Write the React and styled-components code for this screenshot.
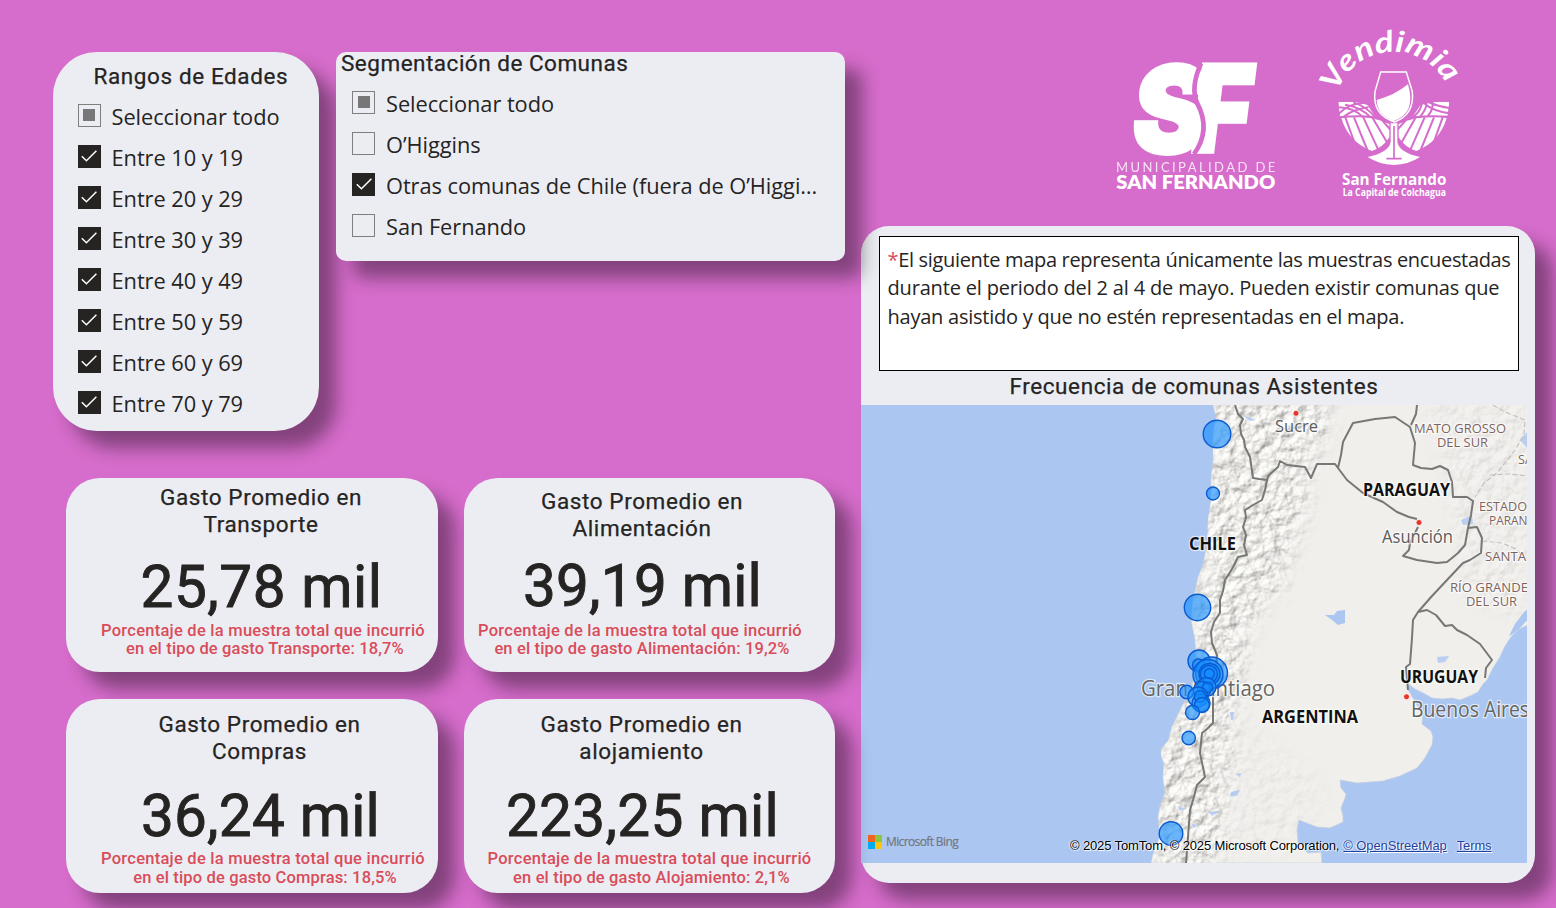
import React from "react";
import styled, { createGlobalStyle } from "styled-components";

const GlobalStyle = createGlobalStyle`
  * { box-sizing: border-box; }
  body { margin: 0; background: #d66ccb; overflow: hidden; }
`;

const din = `Roboto, "Liberation Sans", sans-serif`;
const segoe = `"Open Sans", "Noto Sans", sans-serif`;

const Page = styled.main`
  display: flex;
  width: 1556px;
  height: 908px;
  padding-left: 53px;
  background: #d66ccb;
  color: #252423;
  overflow: hidden;
`;

const LeftColumn = styled.div`
  position: relative;
  z-index: 1;
  display: flex;
  flex-direction: column;
  width: 808px;
  padding-top: 52px;
`;

const RightColumn = styled.div`
  display: flex;
  flex-direction: column;
  width: 674px;
`;

const Card = styled.section`
  background: #ecedf3;
  border-radius: ${(p) => p.$radius}px;
  box-shadow: 17px 17px 18px 0 rgba(0, 0, 0, 0.39);
`;

const SlicerRow = styled.div`
  display: flex;
  align-items: flex-start;
  gap: 17px;
  height: 426px;
`;

const AgeSlicer = styled(Card)`
  width: 266px;
  height: 379px;
  padding: 10.5px 0 0 24.5px;
`;

const ComunaSlicer = styled(Card)`
  width: 509px;
  height: 209px;
  padding-left: 16px;
`;

const Title = styled.h2`
  margin: 0;
  font: 400 22.5px/27px ${din};
  letter-spacing: 0.6px;
  white-space: nowrap;
  -webkit-text-stroke: 0.25px #252423;
`;

const AgeTitle = styled(Title)`
  padding-left: 16px;
  margin-bottom: 6.5px;
`;

const ComunaTitle = styled(Title)`
  margin: 0 0 8px -11px;
  line-height: 23px;
  letter-spacing: 0.5px;
`;

const OptionRow = styled.label`
  display: flex;
  align-items: center;
  gap: 11px;
  height: 41px;
  font: 400 21.8px/41px ${segoe};
  letter-spacing: -0.05px;
  white-space: nowrap;
`;

const Box = styled.span`
  display: flex;
  align-items: center;
  justify-content: center;
  width: 23px;
  height: 23px;
  margin-bottom: 3px;
  border: 1.5px solid ${(p) => (p.$state === "on" ? "#252423" : "#7f7f80")};
  background: ${(p) => (p.$state === "on" ? "#252423" : "transparent")};
`;

const PartialMark = styled.span`
  width: 12px;
  height: 12px;
  background: #777;
`;

const CardGrid = styled.div`
  display: grid;
  grid-template-columns: 372px 371px;
  grid-auto-rows: 194px;
  gap: 27px 26px;
  padding-left: 13px;
`;

const MetricCard = styled(Card)`
  padding-top: ${(p) => p.$top}px;
  text-align: center;
`;

const MetricTitle = styled(Title)`
  margin-left: ${(p) => p.$shift}px;
  white-space: pre-line;
`;

const MetricValue = styled.div`
  margin: ${(p) => p.$gap}px 0 0 ${(p) => p.$shift}px;
  font: 400 58.5px/60px ${din};
  letter-spacing: ${(p) => p.$spacing}px;
  white-space: nowrap;
  -webkit-text-stroke: 0.9px #252423;
`;

const MetricNote = styled.p`
  margin: ${(p) => p.$gap}px 0 0 ${(p) => p.$shift}px;
  font: 500 16.5px/${(p) => p.$line}px ${din};
  letter-spacing: 0.25px;
  color: #d94c59;
  white-space: nowrap;
`;

const NoteDetail = styled.span`
  display: block;
  padding-left: 4px;
  letter-spacing: 0.15px;
`;

const Logos = styled.header`
  display: flex;
  gap: 43px;
  height: 226px;
  padding: 32px 0 0 254px;
`;

const MunicipalLogo = styled.svg`
  width: 162px;
  height: 132px;
  margin-top: 28px;
  overflow: visible;
`;

const VendimiaLogo = styled.svg`
  width: 136px;
  height: 169px;
  overflow: visible;
`;

const MapPanel = styled(Card)`
  height: 657px;
  padding-top: 10px;
`;

const Notice = styled.p`
  width: 640px;
  height: 135px;
  margin: 0 0 1.5px 18px;
  padding: 8.5px 0 0 7.5px;
  border: 1.6px solid #000;
  background: #fff;
  font: 400 20px/28.5px ${segoe};
  white-space: nowrap;
`;

const NoticeLine = styled.span`
  display: block;
  letter-spacing: ${(p) => p.$spacing}px;
`;

const Asterisk = styled.span`
  color: #d94c59;
`;

const MapTitle = styled(Title)`
  padding-right: 8px;
  margin-bottom: 5.5px;
  text-align: center;
`;

const MapFrame = styled.div`
  position: relative;
  width: 666px;
  height: 457.5px;
`;

const MapDrawing = styled.svg`
  display: block;
  width: 666px;
  height: 457.5px;
`;

const Brand = styled.div`
  position: absolute;
  left: 7px;
  bottom: 13px;
  display: flex;
  align-items: center;
  gap: 4px;
  font: 400 12px/16px ${segoe};
  letter-spacing: -0.62px;
  color: #72777f;
  -webkit-text-stroke: 0.2px #72777f;
`;

const BrandSquares = styled.span`
  display: grid;
  grid-template-columns: 7px 7px;
  grid-auto-rows: 7px;
`;

const Square = styled.i`
  background: ${(p) => p.$color};
`;

const Attribution = styled.div`
  position: absolute;
  right: 35.5px;
  bottom: 9px;
  display: flex;
  font: 400 13px/16px "Liberation Sans", Arial, sans-serif;
  letter-spacing: -0.14px;
  color: #000;
  white-space: pre;
  text-shadow: 1px 1px 1px #fff, -1px 0 1px #fff;
`;

const MapLink = styled.a`
  margin-left: ${(p) => p.$gap}px;
  color: #1f3f9e;
  letter-spacing: -0.05px;
  font-size: 12.9px;
  text-decoration: underline;
`;

const ages = ["10 y 19", "20 y 29", "30 y 39", "40 y 49", "50 y 59", "60 y 69", "70 y 79"];

const comunas = [
  { label: "Seleccionar todo", state: "partial" },
  { label: "O’Higgins", state: "off" },
  { label: "Otras comunas de Chile (fuera de O’Higgi…", state: "on" },
  { label: "San Fernando", state: "off" },
];

const metrics = [
  { name: "Transporte", note: "Transporte: 18,7%", value: "25,78 mil", top: 5.5, line: 18.3, gaps: [19, 5.5], shifts: [18, 19, 22], spacing: 0.5 },
  { name: "Alimentación", note: "Alimentación: 19,2%", value: "39,19 mil", top: 9.5, line: 18.3, gaps: [14, 6.5], shifts: [-15, -14, -19], spacing: 0.2 },
  { name: "Compras", note: "Compras: 18,5%", value: "36,24 mil", top: 11.5, line: 19, gaps: [21, 3], shifts: [15, 17, 22], spacing: 0.2 },
  { name: "alojamiento", note: "Alojamiento: 2,1%", value: "223,25 mil", top: 11.5, line: 19, gaps: [21, 3], shifts: [-16, -14, 0], spacing: 0.3 },
];

function Option({ label, state }) {
  return (
    <OptionRow>
      <Box $state={state}>
        {state === "partial" && <PartialMark />}
        {state === "on" && (
          <svg width="20" height="20" viewBox="0 0 20 20" fill="none" stroke="#fff" strokeWidth="1.5">
            <path d="M2.8 10.2 L7.4 14.8 L17.4 4.8" />
          </svg>
        )}
      </Box>
      {label}
    </OptionRow>
  );
}

function Metric({ name, note, value, top, line, gaps, shifts, spacing }) {
  return (
    <MetricCard $radius={34} $top={top}>
      <MetricTitle $shift={shifts[0]}>{`Gasto Promedio en\n${name}`}</MetricTitle>
      <MetricValue $gap={gaps[0]} $shift={shifts[1]} $spacing={spacing}>{value}</MetricValue>
      <MetricNote $gap={gaps[1]} $shift={shifts[2]} $line={line}>
        Porcentaje de la muestra total que incurrió
        <NoteDetail>en el tipo de gasto {note}</NoteDetail>
      </MetricNote>
    </MetricCard>
  );
}

function Municipality() {
  return (
    <MunicipalLogo viewBox="45 120 486 396" fill="#fff">
      <g fontFamily="Inter, sans-serif" fontWeight="900" fontSize="362" stroke="#fff" strokeWidth="11">
        <text transform="translate(88 398) skewX(-6)" textLength="222" lengthAdjust="spacingAndGlyphs">S</text>
        <text transform="translate(264 396) skewX(-7)" textLength="178" lengthAdjust="spacingAndGlyphs">F</text>
      </g>
      <path d="M303 130 Q270 205 292 250 Q334 330 282 402" fill="none" stroke="#d66ccb" strokeWidth="14" />
      <text x="48" y="457" fontFamily="Lato, sans-serif" fontWeight="400" fontSize="39" textLength="478" opacity="0.8">MUNICIPALIDAD DE</text>
      <text x="49" y="507" fontFamily="Lato, sans-serif" fontWeight="800" fontSize="57" textLength="477" lengthAdjust="spacingAndGlyphs">SAN FERNANDO</text>
    </MunicipalLogo>
  );
}

function Vendimia() {
  return (
    <VendimiaLogo viewBox="660 36 408 507" fill="#fff">
      <defs>
        <path id="arch" d="M712 216 A 178 178 0 0 1 1052 226" />
        <clipPath id="bowl"><path d="M715 245 H1048 Q1050 320 1010 372 L962 395 H800 L752 372 Q714 320 715 245 Z" /></clipPath>
      </defs>
      <text fontFamily="Lato, sans-serif" fontStyle="italic" fontWeight="700" fontSize="88">
        <textPath href="#arch" textLength="414" lengthAdjust="spacingAndGlyphs">Vendimia</textPath>
      </text>
      <g clipPath="url(#bowl)">
        <path d="M715 246 Q765 240 802 255 L826 290 H720 Z" />
        <path d="M1048 246 Q1000 240 962 255 L938 290 H1042 Z" />
        <path d="M724 294 Q800 282 868 312 V352 Q850 382 815 393 Q745 365 724 294 Z" />
        <path d="M1040 294 Q964 282 896 312 V352 Q914 382 949 393 Q1019 365 1040 294 Z" />
        <g fill="none" stroke="#d66ccb" strokeWidth="6">
          <path d="M715 262 Q760 262 790 292 M735 254 Q785 262 812 292 M760 247 Q800 260 824 290 M715 282 Q745 250 795 248 M730 291 Q760 268 805 262" />
          <path d="M1048 264 Q1010 258 985 246 M1048 280 Q1000 274 972 250 M938 292 Q965 272 966 246 M958 292 Q980 270 980 246 M980 292 Q1000 272 998 246 M716 292 Q780 286 826 292 M938 292 Q990 286 1048 290" />
          <path d="M736 292 L765 372 M762 292 L802 390 M790 292 L836 392 M818 294 L864 372 M846 300 L872 330 M1028 292 L998 376 M1002 292 L962 390 M974 292 L930 392 M946 294 L902 372 M918 300 L890 332" />
        </g>
      </g>
      <path d="M842 156 H919 L937 215 Q944 284 884 306 V366 Q890 398 960 410 Q925 434 882 435 Q838 434 803 410 Q872 398 878 366 V306 Q816 284 825 215 Z" fill="#d66ccb" stroke="#d66ccb" strokeWidth="14" />
      <path d="M842 156 H919 L937 215 Q944 284 884 306 Q816 284 825 215 Z" fill="none" stroke="#fff" strokeWidth="4.5" />
      <path d="M830 240 Q885 225 924 193 Q950 280 881 303 Q832 286 830 240 Z" />
      <path d="M872 308 Q882 312 892 308 V366 Q898 398 960 411 Q925 434 882 435 Q838 434 803 411 Q866 398 872 366 Z" />
      <path d="M882 318 V415 M859 416 H905" stroke="#d66ccb" strokeWidth="5" />
      <text x="726" y="495" fontFamily="Open Sans, sans-serif" fontWeight="700" fontSize="47" textLength="313" lengthAdjust="spacingAndGlyphs">San Fernando</text>
      <text x="728" y="527" fontFamily="Open Sans, sans-serif" fontWeight="700" fontSize="29" textLength="310" lengthAdjust="spacingAndGlyphs">La Capital de Colchagua</text>
    </VendimiaLogo>
  );
}

const land =
  "M1213 405 L1216 417 L1213 435 L1213 462 L1211 477 L1211 500 L1208 520 L1207 545 L1203 565 L1198 577 L1193 600 L1191 620 L1195 640 L1196 655 L1197 670 L1190 692 L1181 708 L1172 727 L1168 741 L1161 749 L1161 756 L1164 763 L1163 777 L1165 793 L1160 806 L1158 817 L1160 837 L1154 850 L1151 863 L1322 863 L1321 852 L1308 853 L1298 843 L1297 830 L1299 820 L1317 827 L1330 828 L1343 822 L1343 816 L1341 808 L1345 798 L1346 794 L1341 788 L1340 780 L1357 783 L1383 781 L1400 776 L1417 768 L1425 758 L1432 745 L1433 737 L1431 731 L1422 724 L1423 712 L1416 704 L1413 698 L1407 688 L1408 684 L1415 689 L1423 693 L1432 698 L1442 699 L1452 698 L1460 700 L1470 696 L1478 692 L1483 684 L1487 680 L1493 668 L1500 657 L1505 646 L1511 637 L1519 629 L1528 625 L1528 404 Z";

const borders = [
  "M1235 405 L1238 414 L1243 419 L1240 425 L1241 434 L1244 440 L1245 447 L1250 457 L1253 478 L1259 479 L1267 480 L1265 490 L1262 500 L1253 505 L1245 510 L1246 518 L1243 527 L1246 535 L1244 545 L1247 555 L1238 557 L1232 569 L1225 580 L1223 591 L1220 600 L1220 613 L1214 622 L1211 632 L1212 643 L1217 655 L1215 680 L1213 697 L1213 723 L1207 729 L1202 733 L1200 753 L1205 777 L1197 785 L1193 800 L1190 810 L1188 837 L1186 863",
  "M1267 480 L1268 476 L1278 467 L1280 461 L1287 465 L1305 467 L1311 478 L1317 464 L1335 464 L1338 468 L1341 455 L1343 442 L1353 423 L1375 419 L1395 417 L1410 427 L1415 443 L1413 465 L1421 468 L1432 469 L1440 466 L1448 470 L1452 482 L1453 497 L1467 497 L1473 501 L1471 515 L1468 528 L1465 545 L1458 553 L1452 558 L1447 562 L1437 563 L1417 560 L1403 556 L1409 550 L1410 543 L1418 527",
  "M1417 405 L1416 414 L1411 425",
  "M1338 468 L1347 480 L1363 493 L1374 498 L1383 502 L1397 512 L1409 517 L1417 519",
  "M1468 528 L1477 527 L1482 538 L1481 553 L1470 560 L1463 563 L1447 580 L1432 596 L1418 612 L1413 620 L1412 638 L1410 664 L1406 667 L1408 690",
  "M1418 612 L1427 610 L1436 615 L1445 626 L1452 625 L1457 630 L1467 635 L1480 644 L1492 660 L1486 668 L1485 678",
];

const statesLines = [
  "M1493 405 L1505 412 L1525 420 L1524 435 L1515 450 L1498 472 L1484 483 L1475 497",
  "M1490 475 L1510 474 L1527 476",
  "M1482 541 L1502 543 L1516 549 L1527 560",
];

const bubbles = [
  [1217, 434, 13.8], [1213, 493.5, 6.5], [1197.5, 607.5, 13.2], [1199, 661, 11], [1198.5, 665, 6],
  [1211.5, 673, 16], [1208, 674.5, 15], [1209.5, 674, 10.5], [1209, 674, 8.5], [1209.3, 673.8, 5],
  [1206.5, 687, 9.5], [1202, 690, 8.5], [1207.5, 687.5, 5], [1186.7, 692, 6.8], [1198, 697, 10],
  [1201, 703, 9], [1200, 696.5, 5.8], [1202, 705, 7.5], [1192.5, 712.5, 7], [1188.7, 738, 6.7], [1171, 833.5, 11.8],
];

const labels = [
  { text: "Sucre", x: 1275, y: 432, w: 43, size: 16.5, color: "#5c5c5c" },
  { text: "MATO GROSSO", x: 1414, y: 433, w: 92, size: 13, color: "#7d6461" },
  { text: "DEL SUR", x: 1437, y: 447, w: 51, size: 13, color: "#7d6461" },
  { text: "SA", x: 1518, y: 464, w: 15, size: 13, color: "#7d6461" },
  { text: "ESTADO", x: 1479, y: 511, w: 48, size: 13, color: "#7d6461" },
  { text: "PARANÁ", x: 1489, y: 525, w: 46, size: 13, color: "#7d6461" },
  { text: "SANTA", x: 1485, y: 560.5, w: 41, size: 13, color: "#7d6461" },
  { text: "RÍO GRANDE", x: 1450, y: 592, w: 78, size: 13, color: "#7d6461" },
  { text: "DEL SUR", x: 1466, y: 606, w: 51, size: 13, color: "#7d6461" },
  { text: "Asunción", x: 1382, y: 542.5, w: 71, size: 17.5, color: "#5c5c5c" },
  { text: "Gran Santiago", x: 1141, y: 695.5, w: 134, size: 21, color: "#666" },
  { text: "Buenos Aires", x: 1411, y: 717, w: 118, size: 21.5, color: "#666" },
  { text: "PARAGUAY", x: 1363, y: 495.5, w: 87, size: 17.5, color: "#111", bold: true },
  { text: "CHILE", x: 1189, y: 549.5, w: 47, size: 17.5, color: "#111", bold: true },
  { text: "URUGUAY", x: 1400, y: 682.5, w: 78, size: 17.5, color: "#111", bold: true },
  { text: "ARGENTINA", x: 1262, y: 722.5, w: 96, size: 17.5, color: "#111", bold: true },
];

function SouthAmerica() {
  return (
    <MapDrawing viewBox="861 405 666 457.5">
      <defs>
        <filter id="soft" x="-50%" y="-50%" width="200%" height="200%"><feGaussianBlur stdDeviation="10" /></filter>
        <filter id="relief" x="0" y="0" width="100%" height="100%" colorInterpolationFilters="sRGB">
          <feTurbulence type="fractalNoise" baseFrequency="0.09" numOctaves="3" seed="7" />
          <feColorMatrix values="0 0 0 0 0  0 0 0 0 0  0 0 0 0 0  1 0 0 0 0" />
          <feDiffuseLighting surfaceScale="2.6" diffuseConstant="1.09" lightingColor="#f1f0ed">
            <feDistantLight azimuth="225" elevation="64" />
          </feDiffuseLighting>
        </filter>
        <clipPath id="landClip"><path d={land} /></clipPath>
        <mask id="andes" maskUnits="userSpaceOnUse" x="861" y="405" width="667" height="458">
          <g filter="url(#soft)">
            <path d="M1212 395 L1330 395 L1325 440 L1300 470 L1310 490 L1295 540 L1280 590 L1250 620 L1240 680 L1230 740 L1225 800 L1215 870 L1150 870 L1160 750 L1190 690 L1200 560 Z" fill="#fff" fillOpacity="0.85" />
            <path d="M1240 720 L1330 790 L1290 850 L1200 860 Z" fill="#fff" fillOpacity="0.15" />
            <path d="M1430 400 L1530 400 L1530 620 L1470 600 Z" fill="#fff" fillOpacity="0.22" />
          </g>
        </mask>
      </defs>
      <rect x="861" y="405" width="667" height="458" fill="#abc6f1" />
      <path d={land} fill="#f0efec" stroke="#c4cfe0" strokeWidth="0.8" />
      <g clipPath="url(#landClip)">
        <g mask="url(#andes)"><rect x="1140" y="405" width="388" height="458" filter="url(#relief)" /></g>
      </g>
      <g fill="#abc6f1">
        <path d="M1325 615 L1334 615 L1337 611 L1345 610 L1345 623 L1338 625 L1332 620 Z" />
        <path d="M1509 636 L1515 624 L1524 612 L1528 609 L1528 619 L1520 628 L1513 634 Z" />
        <path d="M1230 712 L1234 712 L1233 720 L1231 720 Z M1231 792 L1240 790 L1237 796 L1230 796 Z M1208 812 L1220 811 L1212 816 Z M1235 774 L1241 773 L1240 777 Z M1437 657 L1449 656 L1445 662 L1438 663 Z M1243 415 L1256 420 L1250 421 Z M1461 520 L1472 515 L1473 524 L1463 525 Z M1520 440 L1527 432 L1527 448 Z M1178 807 L1187 808 L1180 811 Z M1192 824 L1199 825 L1193 828 Z" opacity="0.8" />
      </g>
      <g fill="none" stroke="#c2c2c0" strokeWidth="1.2" strokeDasharray="5 2.5">
        {statesLines.map((d) => <path key={d} d={d} />)}
      </g>
      <g fill="none" stroke="#777775" strokeWidth="2" strokeLinejoin="round">
        {borders.map((d) => <path key={d} d={d} />)}
      </g>
      <g fill="#e8352b" stroke="#fff" strokeWidth="0.8">
        <circle cx="1296" cy="413.3" r="3" />
        <circle cx="1419" cy="522.5" r="3" />
        <circle cx="1406.5" cy="696.8" r="3" />
      </g>
      {labels.map((l) => (
        <text
          key={l.text + l.y}
          x={l.x}
          y={l.y}
          textLength={l.w}
          lengthAdjust="spacingAndGlyphs"
          fontFamily="Open Sans, Noto Sans, sans-serif"
          fontSize={l.size}
          fontWeight={l.bold ? 700 : 400}
          fill={l.color}
          stroke="#fff"
          strokeOpacity="0.65"
          strokeWidth="2.5"
          paintOrder="stroke"
        >
          {l.text}
        </text>
      ))}
      <g fill="#118dff" fillOpacity="0.62" stroke="#0b5bd0" strokeWidth="1.4">
        {bubbles.map(([x, y, r]) => <circle key={`${x}-${y}`} cx={x} cy={y} r={r} />)}
      </g>
    </MapDrawing>
  );
}

export default function App() {
  return (
    <Page>
      <GlobalStyle />
      <LeftColumn>
        <SlicerRow>
          <AgeSlicer $radius={44}>
            <AgeTitle>Rangos de Edades</AgeTitle>
            <Option label="Seleccionar todo" state="partial" />
            {ages.map((a) => <Option key={a} label={`Entre ${a}`} state="on" />)}
          </AgeSlicer>
          <ComunaSlicer $radius={10}>
            <ComunaTitle>Segmentación de Comunas</ComunaTitle>
            {comunas.map((c) => <Option key={c.label} {...c} />)}
          </ComunaSlicer>
        </SlicerRow>
        <CardGrid>
          {metrics.map((m) => <Metric key={m.name} {...m} />)}
        </CardGrid>
      </LeftColumn>
      <RightColumn>
        <Logos>
          <Municipality />
          <Vendimia />
        </Logos>
        <MapPanel $radius={28}>
          <Notice>
            <NoticeLine $spacing={-0.33}><Asterisk>*</Asterisk>El siguiente mapa representa únicamente las muestras encuestadas</NoticeLine>
            <NoticeLine $spacing={-0.17}>durante el periodo del 2 al 4 de mayo. Pueden existir comunas que</NoticeLine>
            <NoticeLine $spacing={-0.24}>hayan asistido y que no estén representadas en el mapa.</NoticeLine>
          </Notice>
          <MapTitle>Frecuencia de comunas Asistentes</MapTitle>
          <MapFrame>
            <SouthAmerica />
            <Brand>
              <BrandSquares>
                <Square $color="#f16522" /><Square $color="#8dc63f" />
                <Square $color="#00aeef" /><Square $color="#ffc20e" />
              </BrandSquares>
              Microsoft Bing
            </Brand>
            <Attribution>
              © 2025 TomTom, © 2025 Microsoft Corporation,
              <MapLink $gap={4}>© OpenStreetMap</MapLink>
              <MapLink $gap={10}>Terms</MapLink>
            </Attribution>
          </MapFrame>
        </MapPanel>
      </RightColumn>
    </Page>
  );
}
